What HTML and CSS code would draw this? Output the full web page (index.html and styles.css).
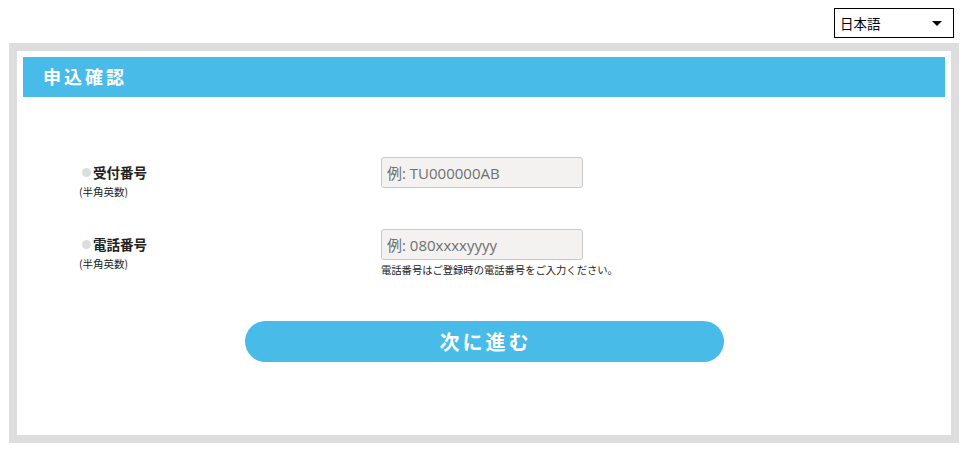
FILE: index.html
```html
<!DOCTYPE html>
<html lang="ja">
<head>
  <meta charset="UTF-8" />
  <meta name="viewport" content="width=device-width, initial-scale=1.0"/>
  <title>申込確認</title>
  <link rel="stylesheet" href="styles.css">
</head>
<body>

  <div class="lang-bar">
    <div class="lang-select">
      <span>日本語</span>
      <span class="caret"></span>
    </div>
  </div>

  <div class="frame">
    <h2 class="title">申込確認</h2>

    <form class="form">
      <div class="row">
        <div class="label">
          <div class="label-main"><span class="dot"></span>受付番号</div>
          <div class="label-sub">(半角英数)</div>
        </div>
        <div class="field">
          <input type="text" placeholder="例: TU000000AB" />
        </div>
      </div>

      <div class="row">
        <div class="label">
          <div class="label-main"><span class="dot"></span>電話番号</div>
          <div class="label-sub">(半角英数)</div>
        </div>
        <div class="field">
          <input type="text" placeholder="例: 080xxxxyyyy" />
          <p class="note">電話番号はご登録時の電話番号をご入力ください。</p>
        </div>
      </div>

      <div class="actions">
        <button type="button" class="btn">次に進む</button>
      </div>
    </form>
  </div>

</body>
</html>
```

FILE: styles.css
```css
* {
  margin: 0; padding: 0; box-sizing: border-box;
  font-family: 'Noto Sans CJK JP', 'Noto Sans', sans-serif;
}
body {
  background: #fff;
  color: #222;
  padding: 8px 9px 0;
}
.lang-bar {
  display: flex;
  justify-content: flex-end;
  padding-right: 3px;
}
.lang-select {
  width: 120px;
  height: 30px;
  border: 1px solid #000;
  display: flex;
  align-items: center;
  justify-content: space-between;
  padding: 0 11px 0 5px;
  font-size: 13.5px;
  color: #000;
}
.caret {
  width: 0; height: 0;
  border-left: 5px solid transparent;
  border-right: 5px solid transparent;
  border-top: 5px solid #000;
}
.frame {
  margin-top: 5px;
  width: 950px;
  height: 400px;
  border: 8px solid #dddddd;
  padding: 6px;
}
.title {
  background: #48bbe8;
  color: #fff;
  height: 40px;
  line-height: 38px;
  padding-left: 20px;
  font-size: 18px;
  font-weight: bold;
  letter-spacing: 3px;
}
.form {
  padding: 60px 0 0 56px;
}
.row {
  display: flex;
  align-items: flex-start;
  margin-bottom: 29px;
}
.row:nth-child(2) {
  margin-bottom: 42px;
}
.label {
  width: 302px;
  padding-top: 6px;
}
.label-main {
  display: flex;
  align-items: center;
  font-size: 13.5px;
  font-weight: bold;
  line-height: 18px;
  padding-left: 3px;
}
.dot {
  flex-shrink: 0;
  width: 9px;
  height: 9px;
  border-radius: 50%;
  background: #dddddd;
  margin-right: 2px;
}
.label-sub {
  font-size: 10.5px;
  line-height: 16px;
  margin-top: 3px;
}
.field input {
  display: block;
  width: 202px;
  height: 31px;
  border: 1px solid #c8c8c8;
  border-radius: 3px;
  background: #f3f2f0;
  padding: 0 5px;
  font-family: 'Open Sans', 'Noto Sans CJK JP', sans-serif;
  font-size: 15px;
}
.field input::placeholder {
  color: #707070;
}
.note {
  font-size: 10.3px;
  line-height: 18px;
  margin-top: 1px;
}
.actions {
  display: flex;
  justify-content: center;
  margin-left: -56px;
}
.btn {
  width: 479px;
  height: 41px;
  border: none;
  border-radius: 21px;
  background: #48bbe8;
  color: #fff;
  font-size: 20px;
  font-weight: bold;
  letter-spacing: 3px;
  padding-left: 3px;
  cursor: pointer;
}
```
